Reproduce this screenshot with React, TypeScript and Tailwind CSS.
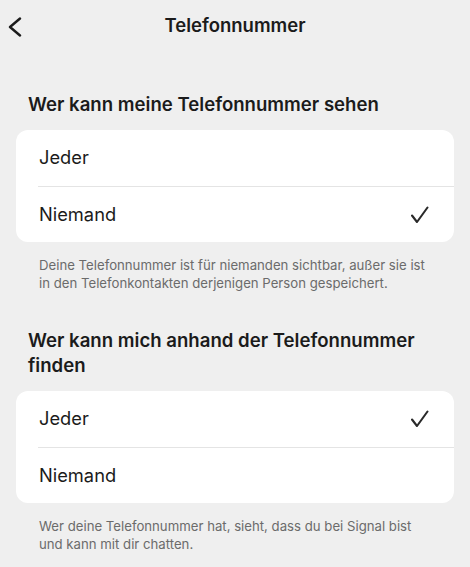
import React from 'react';

type Option = { label: string; selected: boolean };

const Check = () => (
  <svg width="19" height="18" viewBox="0 0 19 18" fill="none" stroke="#2a2a2a" strokeWidth="2.1" strokeLinecap="round" strokeLinejoin="round">
    <path d="M2 9.5 L7 16 L17.5 1.5" />
  </svg>
);

const Section = ({ title, options, note }: { title: string; options: Option[]; note: string }) => (
  <section>
    <h2 className="pl-[28px] pr-[16px] text-[18.6px] leading-[25px] font-semibold text-[#1b1b1b]">{title}</h2>
    <div className="mx-[16px] mt-[13px] bg-white rounded-[12px] overflow-hidden">
      {options.map((o, i) => (
        <div key={o.label} className="pl-[22px]">
          <div className={`h-[56px] flex items-center justify-between pl-[1px] pr-[25px] ${i > 0 ? 'border-t border-[#e4e4e4]' : ''}`}>
            <span className="text-[18.3px] text-[#1b1b1b]">{o.label}</span>
            {o.selected && <Check />}
          </div>
        </div>
      ))}
    </div>
    <p className="pl-[39px] pr-[36px] mt-[14px] text-[13.2px] leading-[18px] text-[#6b6b6b]">{note}</p>
  </section>
);

export default function App() {
  return (
    <div className="min-h-[567px] bg-[#efefef] font-['Inter',sans-serif]">
      <header className="h-[52px] grid grid-cols-[44px_1fr_44px] items-center">
        <button className="flex pl-[7px] pt-[2px]">
          <svg width="16" height="20" viewBox="0 0 16 20" fill="none" stroke="#1b1b1b" strokeWidth="2.4" strokeLinecap="round" strokeLinejoin="round">
            <path d="M13 1.5 L3 10 L13 18.5" />
          </svg>
        </button>
        <h1 className="text-center text-[18.5px] font-semibold text-[#1b1b1b]">Telefonnummer</h1>
        <div />
      </header>

      <div className="pt-[40px] flex flex-col gap-[36px]">
        <Section
          title="Wer kann meine Telefonnummer sehen"
          options={[
            { label: 'Jeder', selected: false },
            { label: 'Niemand', selected: true },
          ]}
          note="Deine Telefonnummer ist für niemanden sichtbar, außer sie ist in den Telefonkontakten derjenigen Person gespeichert."
        />
        <Section
          title="Wer kann mich anhand der Telefonnummer finden"
          options={[
            { label: 'Jeder', selected: true },
            { label: 'Niemand', selected: false },
          ]}
          note="Wer deine Telefonnummer hat, sieht, dass du bei Signal bist und kann mit dir chatten."
        />
      </div>
    </div>
  );
}
